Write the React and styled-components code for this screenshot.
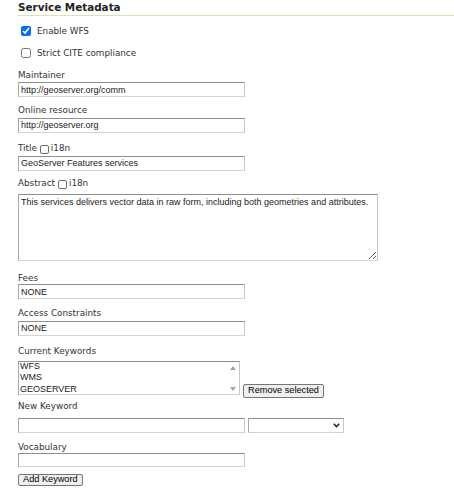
import React from "react";
import styled, { createGlobalStyle } from "styled-components";

const Global = createGlobalStyle`
  html, body { margin: 0; padding: 0; background: #fff; }
  body { font-family: "DejaVu Sans", Verdana, sans-serif; color: #333; }
  * { box-sizing: border-box; }
`;

const Panel = styled.div`
  padding: 0 0 0 18px;
  width: 454px;
  height: 500px;
  overflow: hidden;
`;

const Heading = styled.h3`
  margin: 0;
  padding: 1px 0 2px 0;
  font: bold 10.4px/12px "DejaVu Sans", Verdana, sans-serif;
  color: #222;
  border-bottom: 1px solid #d5e5bb;
`;

const CheckRow = styled.label`
  display: flex;
  align-items: center;
  height: 22px;
  margin-top: ${(p) => p.$mt || 0}px;
  font-size: 8.8px;
  color: #333;
`;

const Box = styled.input.attrs({ type: "checkbox" })`
  width: 10px;
  height: 10px;
  margin: 0 6px 0 3px;
  accent-color: #0b6cf2;
`;

const Label = styled.div`
  font-size: 8.8px;
  line-height: 11px;
  height: 11px;
  color: #333;
  margin-top: ${(p) => p.$mt || 0}px;
  display: flex;
  align-items: center;
`;

const InlineBox = styled.input.attrs({ type: "checkbox" })`
  appearance: none;
  width: 9px;
  height: 9px;
  margin: 2px 2px 0 3px;
  border: 1px solid #6e6e6e;
  border-radius: 2px;
  background: #fff;
`;

const fieldBorder = `
  border: 1px solid;
  border-color: #8e8e8e #c6c6c6 #d4d4d4 #a8a8a8;
  background: #fff;
`;

const TextInput = styled.input.attrs({ type: "text" })`
  display: block;
  width: ${(p) => p.$w || 227}px;
  height: ${(p) => p.$h || 15}px;
  margin: ${(p) => p.$mt || 0}px 0 0 0;
  padding: 0 2px;
  ${fieldBorder}
  font: 9px "Liberation Sans", Arial, sans-serif;
  color: #222;
  outline: none;
`;

const Area = styled.textarea`
  display: block;
  width: 360px;
  height: 67px;
  margin-top: ${(p) => p.$mt || 0}px;
  padding: 2px 2px;
  ${fieldBorder}
  font: 9px/11px "Liberation Sans", Arial, sans-serif;
  color: #222;
  resize: both;
  outline: none;
`;

const Row = styled.div`
  display: flex;
  align-items: ${(p) => p.$align || "flex-start"};
  margin-top: ${(p) => p.$mt || 0}px;
`;

const ListBox = styled.div`
  display: flex;
  width: 222px;
  height: 34.5px;
  ${fieldBorder}
`;

const Options = styled.div`
  flex: 1;
  padding: 0 0 0 1px;
  margin-top: -0.5px;
  font: 9px/11.3px "Liberation Sans", Arial, sans-serif;
  color: #222;
`;

const ScrollCol = styled.div`
  width: 11px;
  display: flex;
  flex-direction: column;
  justify-content: space-between;
  align-items: center;
  padding: 4px 0 3px;
  margin-right: 1px;
`;

const Button = styled.button`
  font: 9.2px/1 "Liberation Sans", Arial, sans-serif;
  color: #000;
  background: #efefef;
  border: 1px solid #767676;
  border-radius: 2px;
  padding: 0 4px;
  height: ${(p) => p.$h || 14}px;
  margin: ${(p) => p.$m || "0"};
`;

const SelectWrap = styled.div`
  position: relative;
  width: 96px;
  height: 14.5px;
  margin-left: 3px;
  ${fieldBorder}
`;

const Chevron = styled.svg`
  position: absolute;
  right: 3px;
  top: 4px;
`;

const Tri = ({ up }) => (
  <svg width="6" height="4" viewBox="0 0 6 4">
    <path d={up ? "M0 4 L3 0 L6 4 Z" : "M0 0 L3 4 L6 0 Z"} fill="#a3a3a3" />
  </svg>
);

export default function App() {
  return (
    <>
      <Global />
      <Panel>
        <Heading>Service Metadata</Heading>
        <CheckRow $mt={4}>
          <Box defaultChecked />
          Enable WFS
        </CheckRow>
        <CheckRow>
          <Box />
          Strict CITE compliance
        </CheckRow>

        <Label $mt={6}>Maintainer</Label>
        <TextInput $mt={1} defaultValue="http://geoserver.org/comm" />

        <Label $mt={8}>Online resource</Label>
        <TextInput $mt={1.5} defaultValue="http://geoserver.org" />

        <Label $mt={10.5}>
          Title
          <InlineBox />
          i18n
        </Label>
        <TextInput $mt={1.7} defaultValue="GeoServer Features services" />

        <Label $mt={7.3}>
          Abstract
          <InlineBox />
          i18n
        </Label>
        <Area
          $mt={5}
          defaultValue="This services delivers vector data in raw form, including both geometries and attributes."
        />

        <Label $mt={12}>Fees</Label>
        <TextInput $mt={0.5} defaultValue="NONE" />

        <Label $mt={9}>Access Constraints</Label>
        <TextInput $mt={1.4} defaultValue="NONE" />

        <Label $mt={10.2}>Current Keywords</Label>
        <Row $mt={3.5} $align="flex-end">
          <ListBox>
            <Options>
              <div>WFS</div>
              <div>WMS</div>
              <div>GEOSERVER</div>
            </Options>
            <ScrollCol>
              <Tri up />
              <Tri />
            </ScrollCol>
          </ListBox>
          <Button $m="0 0 -2.7px 3px">Remove selected</Button>
        </Row>

        <Label $mt={6.2}>New Keyword</Label>
        <Row $mt={6}>
          <TextInput $h={14.5} />
          <SelectWrap>
            <Chevron width="7" height="5" viewBox="0 0 7 5">
              <path d="M0.8 0.8 L3.5 3.6 L6.2 0.8" fill="none" stroke="#222" strokeWidth="1.5" />
            </Chevron>
          </SelectWrap>
        </Row>

        <Label $mt={9}>Vocabulary</Label>
        <TextInput $mt={0} $h={14.5} />

        <Button $m="6px 0 0 0" $h={12.5}>Add Keyword</Button>
      </Panel>
    </>
  );
}
